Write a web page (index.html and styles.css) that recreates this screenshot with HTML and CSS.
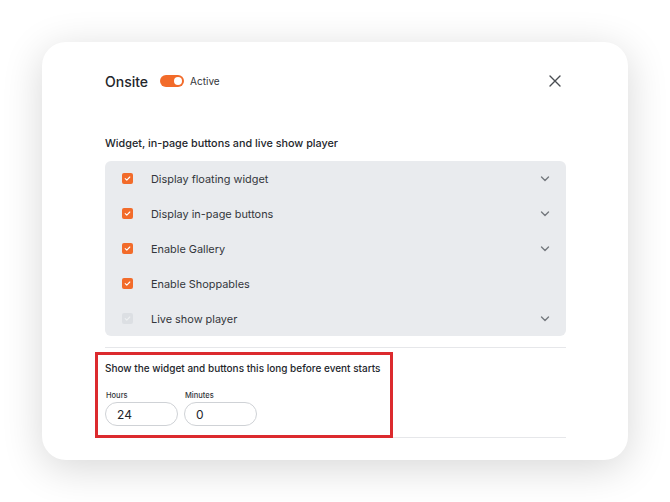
FILE: index.html
```html
<!DOCTYPE html>
<html lang="en">
<head>
    <meta charset="UTF-8">
    <meta name="viewport" content="width=device-width, initial-scale=1.0">
    <title>Onsite settings</title>
    <link rel="stylesheet" href="styles.css">
</head>
<body>
    <div class="card">
        <div class="card-header">
            <div class="title-group">
                <h1 class="title">Onsite</h1>
                <span class="toggle"><span class="knob"></span></span>
                <span class="toggle-label">Active</span>
            </div>
            <button class="close-button" aria-label="Close">
                <svg width="12" height="12" viewBox="0 0 12 12"><path d="M1 1 L11 11 M11 1 L1 11" stroke="#4a4d52" stroke-width="1.4" stroke-linecap="round"/></svg>
            </button>
        </div>

        <h2 class="section-title">Widget, in-page buttons and live show player</h2>

        <div class="option-list">
            <div class="option-row">
                <span class="checkbox checked"><svg width="11" height="11" viewBox="0 0 11 11"><path d="M3.2 5.7 L4.8 7.2 L7.8 4" fill="none" stroke="#fff" stroke-width="1.1" stroke-linecap="round" stroke-linejoin="round"/></svg></span>
                <span class="option-label">Display floating widget</span>
                <svg class="chevron" width="10" height="6" viewBox="0 0 10 6"><path d="M1.5 1 L5 4.5 L8.5 1" fill="none" stroke="#75797f" stroke-width="1.4" stroke-linecap="round" stroke-linejoin="round"/></svg>
            </div>
            <div class="option-row">
                <span class="checkbox checked"><svg width="11" height="11" viewBox="0 0 11 11"><path d="M3.2 5.7 L4.8 7.2 L7.8 4" fill="none" stroke="#fff" stroke-width="1.1" stroke-linecap="round" stroke-linejoin="round"/></svg></span>
                <span class="option-label">Display in-page buttons</span>
                <svg class="chevron" width="10" height="6" viewBox="0 0 10 6"><path d="M1.5 1 L5 4.5 L8.5 1" fill="none" stroke="#75797f" stroke-width="1.4" stroke-linecap="round" stroke-linejoin="round"/></svg>
            </div>
            <div class="option-row">
                <span class="checkbox checked"><svg width="11" height="11" viewBox="0 0 11 11"><path d="M3.2 5.7 L4.8 7.2 L7.8 4" fill="none" stroke="#fff" stroke-width="1.1" stroke-linecap="round" stroke-linejoin="round"/></svg></span>
                <span class="option-label">Enable Gallery</span>
                <svg class="chevron" width="10" height="6" viewBox="0 0 10 6"><path d="M1.5 1 L5 4.5 L8.5 1" fill="none" stroke="#75797f" stroke-width="1.4" stroke-linecap="round" stroke-linejoin="round"/></svg>
            </div>
            <div class="option-row">
                <span class="checkbox checked"><svg width="11" height="11" viewBox="0 0 11 11"><path d="M3.2 5.7 L4.8 7.2 L7.8 4" fill="none" stroke="#fff" stroke-width="1.1" stroke-linecap="round" stroke-linejoin="round"/></svg></span>
                <span class="option-label">Enable Shoppables</span>
            </div>
            <div class="option-row">
                <span class="checkbox disabled"><svg width="11" height="11" viewBox="0 0 11 11"><path d="M3.2 5.7 L4.8 7.2 L7.8 4" fill="none" stroke="#eef0f2" stroke-width="1.1" stroke-linecap="round" stroke-linejoin="round"/></svg></span>
                <span class="option-label">Live show player</span>
                <svg class="chevron" width="10" height="6" viewBox="0 0 10 6"><path d="M1.5 1 L5 4.5 L8.5 1" fill="none" stroke="#75797f" stroke-width="1.4" stroke-linecap="round" stroke-linejoin="round"/></svg>
            </div>
        </div>

        <div class="timing">
            <div class="highlight">
                <p class="timing-text">Show the widget and buttons this long before event starts</p>
                <div class="fields">
                    <label class="field">
                        <span class="field-label">Hours</span>
                        <input class="field-input" type="text" value="24">
                    </label>
                    <label class="field">
                        <span class="field-label">Minutes</span>
                        <input class="field-input" type="text" value="0">
                    </label>
                </div>
            </div>
        </div>
    </div>
</body>
</html>
```

FILE: styles.css
```css
body {
    font-family: "Inter", "Liberation Sans", sans-serif;
    background-color: #ffffff;
    margin: 0;
    padding: 42px;
    color: #23262b;
}
.card {
    background: #ffffff;
    border-radius: 24px;
    box-shadow: 0 8px 40px rgba(0, 0, 0, 0.16);
    width: 586px;
    height: 418px;
    padding: 27px 62px 0 63px;
    box-sizing: border-box;
}
.card-header {
    display: flex;
    align-items: center;
    justify-content: space-between;
    height: 24px;
}
.title-group {
    display: flex;
    align-items: center;
}
.title {
    font-size: 14px;
    font-weight: 500;
    margin: 0 12px 0 0;
    color: #23262b;
}
.toggle {
    position: relative;
    width: 24px;
    height: 12px;
    border-radius: 6px;
    background-color: #f26b2a;
    margin-right: 6px;
}
.knob {
    position: absolute;
    top: 2px;
    right: 2px;
    width: 8px;
    height: 8px;
    border-radius: 50%;
    background: #ffffff;
}
.toggle-label {
    font-size: 10px;
    color: #33363b;
}
.close-button {
    background: none;
    border: none;
    padding: 0;
    margin-right: 5px;
    display: flex;
    cursor: pointer;
}
.section-title {
    font-size: 10.8px;
    font-weight: 500;
    margin: 44px 0 11px 0;
    color: #23262b;
}
.option-list {
    background-color: #e9ebee;
    border-radius: 6px;
}
.option-row {
    display: flex;
    align-items: center;
    height: 35px;
    padding: 0 16px 0 17px;
}
.checkbox {
    width: 11px;
    height: 11px;
    border-radius: 2px;
    display: flex;
    margin-right: 18px;
}
.checkbox.checked {
    background-color: #f26b2a;
}
.checkbox.disabled {
    background-color: #dcdfe3;
}
.option-label {
    flex: 1;
    font-size: 10.9px;
    color: #33363b;
}
.timing {
    border-top: 1px solid #e6e7ea;
    border-bottom: 1px solid #e6e7ea;
    margin-top: 11px;
    padding-top: 4px;
}
.highlight {
    margin: 0 0 -1px -10px;
    width: 298px;
    height: 86px;
    box-sizing: border-box;
    border: 3px solid #dc2a2e;
    padding: 6px 7px 0 7px;
}
.timing-text {
    margin: 0;
    font-size: 10px;
    font-weight: 500;
    line-height: 14px;
    color: #23262b;
}
.fields {
    display: flex;
    gap: 6px;
    margin-top: 16px;
}
.field {
    display: flex;
    flex-direction: column;
}
.field-label {
    font-size: 7.5px;
    font-weight: 500;
    margin: 0 0 2px 1px;
    color: #33363b;
}
.field-input {
    width: 73px;
    height: 24px;
    box-sizing: border-box;
    border: 1px solid #cfd2d6;
    border-radius: 12px;
    padding: 0 11px;
    font-family: inherit;
    font-size: 12px;
    color: #23262b;
    outline: none;
}
```
